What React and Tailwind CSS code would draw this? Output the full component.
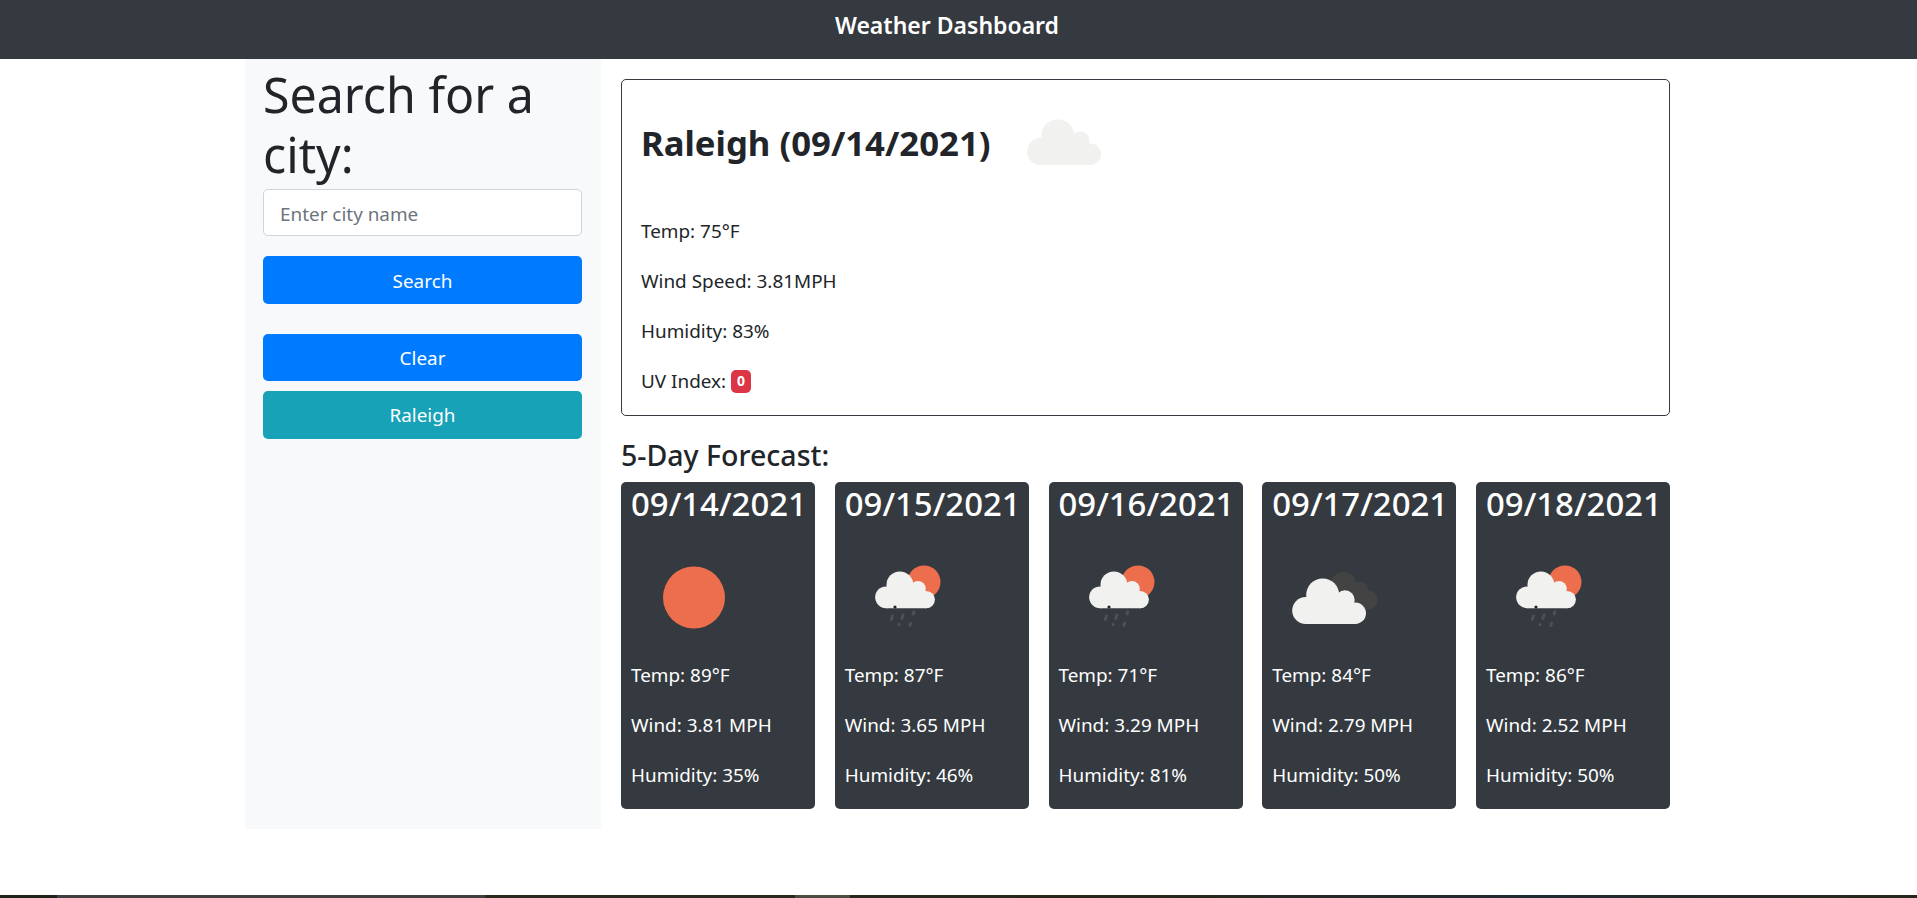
import React from 'react';

const FONT = "font-['Noto_Sans','Open_Sans',sans-serif]";

const forecast = [
  { date: '09/14/2021', icon: 'sun', temp: 89, wind: '3.81', humidity: 35 },
  { date: '09/15/2021', icon: 'rain', temp: 87, wind: '3.65', humidity: 46 },
  { date: '09/16/2021', icon: 'rain', temp: 71, wind: '3.29', humidity: 81 },
  { date: '09/17/2021', icon: 'clouds', temp: 84, wind: '2.79', humidity: 50 },
  { date: '09/18/2021', icon: 'rain', temp: 86, wind: '2.52', humidity: 50 },
];

// cloud shape is built from lobes, origin at its top-left
const CloudShape = ({ transform, fill = '#f1f1ef' }) => (
  <g transform={transform} fill={fill}>
    <circle cx="13.7" cy="32.5" r="13.5" />
    <circle cx="30.7" cy="17" r="16.5" />
    <circle cx="53" cy="22" r="9.7" />
    <circle cx="63.3" cy="35.3" r="10.7" />
    <rect x="13.7" y="25" width="49.6" height="21" />
  </g>
);

const WeatherIcon = ({ type, className }) => (
  <svg viewBox="0 0 125 125" className={className}>
    {type === 'sun' && <circle cx="63" cy="62.5" r="31" fill="#ed6e4c" />}
    {type === 'cloud' && <CloudShape transform="translate(25 39)" />}
    {type === 'clouds' && (
      <>
        <g fill="#434343">
          <circle cx="71.3" cy="50" r="13" />
          <circle cx="87" cy="56" r="9.5" />
          <circle cx="96.3" cy="65" r="9.5" />
          <rect x="70" y="58" width="26" height="16" />
        </g>
        <CloudShape transform="translate(20 43)" />
      </>
    )}
    {type === 'rain' && (
      <>
        <circle cx="79" cy="47" r="16.5" fill="#ed6e4c" />
        <CloudShape transform="translate(30 36) scale(0.81)" />
        <circle cx="50" cy="72" r="1.6" fill="#222529" />
        <g stroke="#4d5055" strokeWidth="3" strokeLinecap="round">
          <line x1="47.5" y1="81" x2="46.3" y2="84.5" />
          <line x1="58" y1="80" x2="56.8" y2="83.5" />
          <line x1="68.8" y1="77" x2="68.2" y2="79" />
          <line x1="54" y1="89.3" x2="54" y2="89.8" />
          <line x1="65.6" y1="88.4" x2="64.8" y2="90.6" />
        </g>
      </>
    )}
  </svg>
);

const ForecastCard = ({ day }) => (
  <div className="w-[194px] h-[327px] bg-[#343a40] rounded-[5px] px-[10px] pt-px text-white">
    <h3 className="text-[32.9px] leading-[42px] mb-[10px] font-medium whitespace-nowrap">{day.date}</h3>
    <WeatherIcon type={day.icon} className="w-[125px] h-[125px]" />
    <p className="text-[18.9px] leading-[30px] mb-[20px]">Temp: {day.temp}°F</p>
    <p className="text-[18.9px] leading-[30px] mb-[20px] whitespace-nowrap">Wind: {day.wind} MPH</p>
    <p className="text-[18.9px] leading-[30px]">Humidity: {day.humidity}%</p>
  </div>
);

export default function App() {
  return (
    <div className={`${FONT} h-[898px] flex flex-col bg-white text-[#212529] overflow-hidden`}>
      <nav className="h-[59px] bg-[#343a40] flex items-center justify-center pr-[23px] pb-[9px]">
        <span className="text-white text-[23px] font-semibold">Weather Dashboard</span>
      </nav>

      <div className="flex ml-[245px] h-[770px]">
        {/* Sidebar */}
        <aside className="w-[356px] bg-[#f8f9fa] pl-[18px] pr-[19px]">
          <h1 className="text-[48.3px] leading-[60px] pt-[5px] mb-[5px]">Search for a city:</h1>
          <input
            className="block w-full h-[47px] bg-white border border-[#ced4da] rounded-[5px] px-[16px] pt-[2px] text-[18.9px] placeholder:text-[#6c757d]"
            placeholder="Enter city name"
          />
          <button className="block w-full h-[48px] mt-[20px] pt-[2px] bg-[#007bff] text-white text-[18.9px] rounded-[5px]">Search</button>
          <button className="block w-full h-[47px] mt-[30px] pt-[2px] bg-[#007bff] text-white text-[18.9px] rounded-[5px]">Clear</button>
          <button className="block w-full h-[48px] mt-[10px] pt-px bg-[#17a2b8] text-white text-[18.9px] rounded-[5px]">Raleigh</button>
        </aside>

        {/* Main */}
        <main className="w-[1089px] pl-[20px] pt-[20px] pr-[20px]">
          <section className="h-[337px] border border-[#343a40] rounded-[5px] px-[19px] text-[18.9px] leading-[30px]">
            <div className="flex items-center h-[125px] mb-[11px]">
              <h2 className="text-[34.7px] leading-[40px] font-bold w-[361px] whitespace-nowrap">Raleigh (09/14/2021)</h2>
              <WeatherIcon type="cloud" className="w-[125px] h-[125px]" />
            </div>
            <p className="mb-[20px]">Temp: 75°F</p>
            <p className="mb-[20px]">Wind Speed: 3.81MPH</p>
            <p className="mb-[20px]">Humidity: 83%</p>
            <p className="flex items-center">
              UV Index:
              <span className="ml-[5px] w-[20px] h-[23px] bg-[#dc3545] text-white rounded-[5px] text-[14px] font-bold flex items-center justify-center">0</span>
            </p>
          </section>

          <h4 className="mt-[21px] mb-[9px] text-[28.5px] leading-[36px] font-medium">5-Day Forecast:</h4>
          <div className="flex justify-between">
            {forecast.map(day => (
              <ForecastCard key={day.date} day={day} />
            ))}
          </div>
        </main>
      </div>

      <div className="flex-1" />
      <div className="h-[3px] flex bg-[linear-gradient(90deg,#2c2b1e_0%,#26281c_60%,#1f2a30_80%,#26281c_100%)]">
        <div className="w-[57px] bg-[#1f2418]" />
        <div className="w-[428px] bg-[#3f3f41]" />
        <div className="w-[310px]" />
        <div className="w-[55px] bg-[#4b4d40]" />
      </div>
    </div>
  );
}
